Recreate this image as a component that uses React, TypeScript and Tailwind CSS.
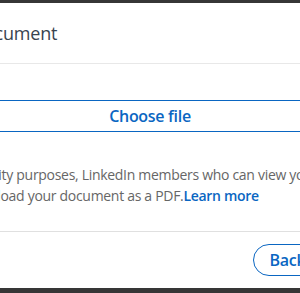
import React from 'react';

const font = { fontFamily: '"Segoe UI", "Open Sans", "Noto Sans", sans-serif' };

const UploadDocumentModal: React.FC = () => {
  return (
    <div className="w-[300px] h-[293px] overflow-hidden bg-[#363636]" style={font}>
      {/* modal is wider than the viewport; only the middle is visible */}
      <div className="mt-[3px] ml-[-112px] w-[524px] h-[285px] bg-white flex flex-col">
        <div className="pl-[19px] pr-6 py-4 border-b border-[#e8e8e8]">
          <h2 className="text-[18px] leading-[28px] font-normal tracking-[-0.2px] text-[#38434f]">Share a document</h2>
        </div>

        <div className="px-6 pt-[36px] pb-[25px] border-b border-[#e0e0e0]">
          <button className="w-full h-8 border border-[#0a66c2] rounded-[4px] text-[16px] font-semibold tracking-[-0.3px] text-[#0a66c2]">
            Choose file
          </button>
          <p className="mt-[32px] pl-[4px] whitespace-nowrap text-[14px] leading-[21px] tracking-[-0.3px] text-[#666666]">
            For accessibility purposes, LinkedIn members who can view your post will be
            <br />
            able to download your document as a PDF.
            <a className="font-semibold text-[#0a66c2]">Learn more</a>
          </p>
        </div>

        <div className="pl-6 pr-[10px] py-3 flex justify-end gap-2">
          <button className="h-8 px-4 rounded-full border border-[#0a66c2] text-[16px] font-semibold tracking-[-0.3px] text-[#0a66c2]">
            Back
          </button>
          <button className="h-8 px-4 rounded-full bg-[#0a66c2] text-[16px] font-semibold tracking-[-0.3px] text-white">
            Done
          </button>
        </div>
      </div>
    </div>
  );
};

export default function App() {
  return <UploadDocumentModal />;
}
